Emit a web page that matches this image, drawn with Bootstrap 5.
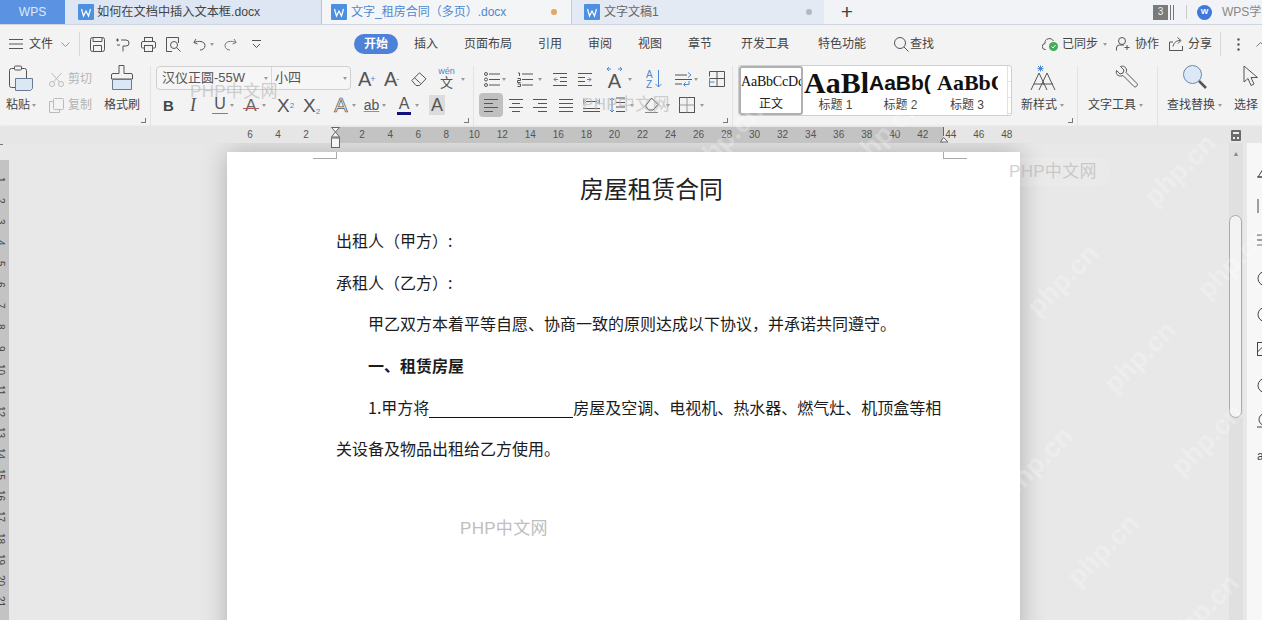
<!DOCTYPE html>
<html lang="zh-CN">
<head>
<meta charset="utf-8">
<title>WPS</title>
<link rel="stylesheet" href="https://cdn.jsdelivr.net/npm/bootstrap@5.3.0/dist/css/bootstrap.min.css">
<style>
html,body{height:100%;overflow:hidden;background:#e8e8e8}
body{font-family:"Liberation Sans","Noto Sans CJK SC",sans-serif;font-size:12px;color:#444;line-height:1.2}
.app{width:1262px;height:620px;overflow:hidden}
svg{flex:none;display:block}
.m1{margin-left:1px}.m2{margin-left:2px}.m3{margin-left:3px}.m4{margin-left:4px}.m5{margin-left:5px}.m6{margin-left:6px}.m7{margin-left:7px}.m8{margin-left:8px}.m9{margin-left:9px}.m10{margin-left:10px}.m11{margin-left:11px}.m12{margin-left:12px}.m13{margin-left:13px}.m14{margin-left:14px}.m15{margin-left:15px}.m16{margin-left:16px}.m26{margin-left:26px}.m28{margin-left:28px}.m29{margin-left:29px}.m93{margin-left:93px}.m108{margin-left:108px}
.rgap{margin-right:3px}
/* tab strip */
.tabstrip{height:25px;background:#f1f3f6;border-bottom:1px solid #cfd5de}
.tabstrip>*{flex:none}
.wps-tab{width:65px;height:24px;background:#5b93e2;color:#dfe9f8;justify-content:center}
.doc-tab{height:24px}
.dt1{width:257px;background:#dde6f2;border-right:1px solid #b9c3d0;padding-left:13px;color:#444;font-size:12.2px}
.dt2{width:249px;background:#f4f5f6;padding-left:9px;color:#4d88d2;font-size:12px}
.dt3{width:253px;background:#e4eaf3;border-left:1px solid #c4ccd8;padding-left:12px;color:#666;font-size:12px}
.dot{width:6px;height:6px;border-radius:50%;flex:none}
.dot-o{background:#e2a765;margin-left:45px}
.dot-g{background:#b5b8bd;margin-left:147px}
.plus{font-size:21px;font-weight:400;color:#444;margin-left:16px;line-height:24px;width:14px;text-align:center}
.cnt{width:15px;height:15px;background:#7a7a7a;color:#eee;font-size:10px;margin-left:299px;justify-content:center}
.cnt2{width:4px;height:15px;border-left:1px solid #777;border-right:1px solid #777;margin-left:2px}
.vsep{width:1px;height:14px;background:#ccc;margin-left:12px}
.wlogo{width:15px;height:15px;border-radius:50%;background:#3f78d8;color:#fff;font-size:8px;font-weight:700;justify-content:center;margin-left:10px}
.acad{margin-left:10px;color:#888;white-space:nowrap}
/* menu */
.menurow{height:38px;background:#f3f3f3}
.mdiv{width:1px;height:24px;background:#d8d8d8}
.pill{width:44px;height:20px;background:#4d82d8;color:#fff;border-radius:10px;font-weight:700;justify-content:center}
.crt{width:0;height:0;border-left:2.5px solid transparent;border-right:2.5px solid transparent;border-top:3px solid #999;flex:none}
/* ribbon */
.ribbon{height:64px;background:#f3f3f3;padding-top:3px}
.grp{height:60px;border-right:1px solid #e3e3e3;flex:none}
.launch{position:absolute;right:4px;bottom:3px;width:5px;height:5px;border-right:1px solid #777;border-bottom:1px solid #777}
.g-clip{width:151px}.g-font{width:323px}.g-para{width:259px}.g-sty{width:345px}.g-tool{width:80px}.g-find{width:104px;border-right:0}
.rw{height:26px;white-space:nowrap}
.big{height:52px}
.bigic{height:26px;margin-top:-1px}
.lbl{height:26px;line-height:26px;margin-top:1px}
.dim{color:#b3b3b3}
.fontbox{width:195px;height:24px;border:1px solid #cfcfcf;border-radius:4px;background:#f6f6f6;margin:-2px 0 0 5px;color:#555;font-size:13px}
.fbn{width:115px;padding-left:5px;height:22px;border-right:1px solid #d8d8d8;white-space:nowrap}
.fbs{width:78px;padding-left:3px}
.glyph{flex:none;text-align:center;color:#555;line-height:1}
.g-b{width:10px;font-weight:700;font-size:15px;color:#444}
.g-i{width:8px;font-family:"Liberation Serif",serif;font-style:italic;font-size:18px}
.g-u{width:16px;font-size:16px;border-bottom:1px solid #4d88d2;padding-bottom:1px}
.g-s{width:16px;font-size:17px;color:#666;position:relative}
.g-s::after{content:"";position:absolute;left:0;right:0;top:11px;height:1px;background:#b85555}
.g-x{width:18px;font-size:19px;white-space:nowrap;text-align:left;margin-right:-2px}
.g-x sup,.g-x sub{font-size:8px;color:#4d88d2}
.g-a{width:20px;font-size:20px;color:#f3f3f3;-webkit-text-stroke:.7px #555}
.g-ab{width:17px;font-size:14px;color:#555;text-decoration:underline;text-decoration-color:#a88}
.g-c{width:14px;font-size:16px;border-bottom:3px solid #12127a}
.g-h{width:16px;font-size:18px;background:#dcdcdc;height:20px;line-height:20px}
.g-ap{width:16px;font-size:20px;white-space:nowrap;text-align:left;margin-right:0}
.g-ap sup{font-size:9px;color:#4d88d2;margin-left:-1px}
.g-w{width:17px;font-size:13px;position:relative;padding-top:7px}
.g-w small{position:absolute;top:-2px;left:0;width:17px;font-size:9px;color:#4d88d2}
.g-sa{width:17px;font-size:20px;position:relative;padding-top:3px}
.g-sa svg{position:absolute;left:0;top:-2px}
.sortic{font-size:10px;fill:#4d88d2;font-family:"Liberation Sans",sans-serif}
.activ{width:24px;height:24px;background:#c0c0c0;border-radius:4px;justify-content:center}
/* styles gallery */
.gallery{width:274px;height:51px;margin:-1px 0 0 5px;border:1px solid #cfcfcf;border-radius:3px;background:#fff;overflow:hidden}
.sty{height:49px;overflow:hidden;flex:none;text-align:center}
.s0{width:64px;border:2px solid #b0b0b0;border-radius:3px}
.s1{width:65px}.s2{width:65px}.s3{width:62px;margin-left:3px}
.sp{height:32px;line-height:34px;white-space:nowrap;overflow:hidden;color:#111;text-align:left;padding-left:1px}
.sp0{font-family:"Liberation Serif",serif;font-size:14px;height:28px;line-height:28px;letter-spacing:-.2px;padding-left:0}
.sp1{font-family:"Liberation Serif",serif;font-weight:700;font-size:30px}
.sp2{font-weight:700;font-size:21px}
.sp3{font-family:"Liberation Serif",serif;font-weight:700;font-size:22px}
.sc{height:15px;line-height:15px;font-size:12px;color:#444}
.s0 .sc{height:17px;line-height:17px;color:#222}
.gscroll{width:11px;margin-left:9px;height:49px;border-left:1px solid #e2e2e2;flex:none}
.gscroll i{display:block;height:16px;border-bottom:1px solid #e2e2e2;text-align:center;font-style:normal;font-size:7px;line-height:16px;color:#888}
/* ruler */
.ruler{height:16px;background:linear-gradient(90deg,#e6e6e6 336px,#c3c3c3 336px,#c3c3c3 943px,#e6e6e6 943px);box-shadow:0 -1px 2px rgba(0,0,0,.08);position:relative}
.ticks{padding-left:236px}
.tk{width:28.04px;text-align:center;font-size:10px;color:#555;flex:none;line-height:16px}
.layout-ic{margin-left:auto;margin-right:21px}
.mk{position:absolute}
.mk-l{left:330px;top:127px}
.mk-r{left:940px;top:127px}
/* document area */
.work{height:477px;background:#e8e8e8}
.vrul{width:9px;height:477px;overflow:hidden;flex:none}
.vrul-top{height:16px}
.vrul-top i{display:block;width:3px;height:1px;background:#777;margin-top:1px}
.vrul-bar{height:461px;background:#c3c3c3;padding-top:9px}
.vn{height:21.1px;width:10px;writing-mode:vertical-rl;font-size:10px;line-height:10px;color:#444;text-align:center;margin-left:-5px;display:block}
.canvas{flex:1 1 auto;min-width:0;overflow:hidden;padding:9px 0 0 218px}
.pg{width:793px;height:520px;background:#fff;box-shadow:0 0 24px rgba(0,0,0,.25);padding:19px 79px 0 109px;position:relative;color:#1c1c1c;font-family:"Noto Sans CJK SC","Liberation Sans",sans-serif;font-size:16px}
.crop{position:absolute;width:24px;height:7px;top:0}
.crop-l{left:86px;border-right:1px solid #aaa;border-bottom:1px solid #aaa}
.crop-r{left:716px;border-left:1px solid #aaa;border-bottom:1px solid #aaa}
.ttl{font-size:23.8px;line-height:34px;text-align:center;margin:0 0 15px 26px;color:#222;font-weight:400}
.ln{height:41.7px;line-height:41.7px;margin:0;white-space:nowrap}
.ind{padding-left:32px}
.blank{display:inline-block;width:144px;height:19px;border-bottom:1px solid #111;vertical-align:-4px}
.track{width:14px;height:477px;background:#e0e0e0;flex:none;position:relative}
.track .up{height:20px;text-align:center;font-size:7px;line-height:22px;color:#888}
.thumb{height:203px;width:13px;margin:52px 0 0 0;background:#f3f3f3;border:1px solid #aaa;border-radius:7px}
.rp-gap{width:4px;flex:none}
.rpanel{width:15px;height:477px;background:#f7f7f7;flex:none;overflow:hidden;padding:0 0 0 10px}
.rpanel svg{margin-bottom:20.5px}
.rpanel .fst{margin-top:22px}
.rpanel .sk{margin-bottom:19px}
.rpanel .jmp{margin-bottom:23px}
/* watermarks */
.wm{position:absolute;color:#b4b4b4;opacity:.6;font-size:17px;letter-spacing:.3px;white-space:nowrap;font-family:"Liberation Sans","Noto Sans CJK SC",sans-serif}
.wm1{left:190px;top:82px}.wm2{left:1003px;top:158px;padding:4px 12px 4px 6px;background:rgba(255,255,255,.18);border-radius:6px;color:#b4b4b4}.wm3{left:460px;top:519px;opacity:.85}.wm4{left:582px;top:95px}
.wp{position:absolute;color:rgba(255,255,255,.26);font-size:27px;font-weight:700;transform:translate(-50%,-50%) rotate(-45deg);white-space:nowrap;font-family:"Liberation Sans",sans-serif}
.w1{left:1180px;top:170px}.w2{left:1063px;top:280px}.w3{left:1140px;top:357px}.w4{left:1207px;top:440px}.w5{left:1103px;top:550px}.w6{left:1037px;top:463px}.w7{left:1203px;top:610px}.w8{left:1233px;top:263px}.w9{left:885px;top:133px}.w10{left:727px;top:138px}
</style>
</head>
<body>
<div class="app position-relative">

<!-- tab strip -->
<div class="tabstrip d-flex align-items-start">
  <div class="wps-tab d-flex align-items-center">WPS</div>
  <div class="doc-tab dt1 d-flex align-items-center"><svg width="16" height="16" viewBox="0 0 16 16"><rect width="16" height="16" rx="1" fill="#4d90e0"/><path d="M3.5 5l2 7 2.5-5 2.500 5 2-7" fill="none" stroke="#fff" stroke-width="1.200"/></svg><span class="m3">如何在文档中插入文本框.docx</span></div>
  <div class="doc-tab dt2 d-flex align-items-center"><svg width="16" height="16" viewBox="0 0 16 16"><rect width="16" height="16" rx="1" fill="#4d90e0"/><path d="M3.5 5l2 7 2.5-5 2.500 5 2-7" fill="none" stroke="#fff" stroke-width="1.200"/></svg><span class="m4">文字_租房合同（多页）.docx</span><span class="dot dot-o"></span></div>
  <div class="doc-tab dt3 d-flex align-items-center"><svg width="16" height="16" viewBox="0 0 16 16"><rect width="16" height="16" rx="1" fill="#4d90e0"/><path d="M3.5 5l2 7 2.5-5 2.500 5 2-7" fill="none" stroke="#fff" stroke-width="1.200"/></svg><span class="m4">文字文稿1</span><span class="dot dot-g"></span></div>
  <span class="plus">+</span>
  <div class="d-flex align-items-center doc-tab">
    <span class="cnt d-flex align-items-center">3</span><span class="cnt2"></span><span class="vsep"></span>
    <span class="wlogo d-flex align-items-center">W</span><span class="acad">WPS学</span>
  </div>
</div>

<!-- menu row -->
<div class="menurow d-flex align-items-center">
  <svg class="m9" width="14" height="10" viewBox="0 0 14 10"><path d="M0 .5h14M0 5h14M0 9.500h14" stroke="#555"/></svg>
  <span class="m6">文件</span>
  <svg class="m8" width="9" height="5" viewBox="0 0 9 5"><path d="M.5.5l4 4 4-4" fill="none" stroke="#999"/></svg>
  <span class="mdiv m9"></span>
  <svg class="m10" width="15" height="15" viewBox="0 0 15 15" fill="none" stroke="#555"><rect x=".5" y=".5" width="14" height="14" rx="2"/><path d="M3 .5v4h9v-4M3.500 14.500v-6h8v6"/></svg>
  <svg class="m11" width="15" height="15" viewBox="0 0 15 15" fill="none" stroke="#555"><path d="M5 3h5a3 3 0 0 1 0 6H7v5.500M0 3h3M1.500 1.500v3M1 8h3"/></svg>
  <svg class="m10" width="15" height="15" viewBox="0 0 15 15" fill="none" stroke="#555"><rect x="3.500" y=".5" width="8" height="4"/><path d="M3 11H1.500a1 1 0 0 1-1-1V6a1.500 1.500 0 0 1 1.500-1.500h11A1.500 1.500 0 0 1 14.500 6v4a1 1 0 0 1-1 1H12"/><rect x="3.500" y="8.500" width="8" height="6"/></svg>
  <svg class="m10" width="15" height="15" viewBox="0 0 15 15" fill="none" stroke="#555"><path d="M12.500 6V.5H.5v14H6"/><circle cx="8" cy="8" r="3.500"/><path d="M10.500 10.500l4 4"/></svg>
  <svg class="m12" width="13" height="13" viewBox="0 0 13 13" fill="none" stroke="#555"><path d="M3 1L.8 4.500 4.500 6M1 4.500C5 2.500 12 3 12 7.500c0 3-2.500 4.500-5 4.500"/></svg>
  <span class="crt m4"></span>
  <svg class="m10" width="13" height="13" viewBox="0 0 13 13" fill="none" stroke="#777"><path d="M10 1l2.200 3.500L8.500 6M12 4.500C8 2.500 1 3 1 7.500c0 3 2.500 4.500 5 4.500"/></svg>
  <svg class="m15" width="9" height="9" viewBox="0 0 9 9" fill="none" stroke="#555"><path d="M0 .5h9M1 4l3.500 3.500L8 4"/></svg>
  <span class="pill d-flex align-items-center m93">开始</span>
  <span class="m16">插入</span><span class="m26">页面布局</span><span class="m26">引用</span><span class="m26">审阅</span><span class="m26">视图</span><span class="m26">章节</span><span class="m29">开发工具</span><span class="m29">特色功能</span>
  <svg class="m28" width="15" height="15" viewBox="0 0 15 15" fill="none" stroke="#555"><circle cx="6" cy="6" r="5.500"/><path d="M10 10l4.500 4.500"/></svg>
  <span class="m1">查找</span>
  <svg class="m108" width="17" height="15" viewBox="0 0 17 15"><path d="M4 12.500H3.500a3 3 0 0 1-.5-6A4.500 4.500 0 0 1 11.500 4" fill="none" stroke="#555"/><circle cx="11.500" cy="9.500" r="4.500" fill="#3eae5a"/><path d="M9.500 9.500l1.500 1.500 2.500-3" fill="none" stroke="#fff"/></svg>
  <span class="m3">已同步</span><span class="crt m5"></span>
  <svg class="m9" width="15" height="14" viewBox="0 0 15 14" fill="none" stroke="#555"><circle cx="6" cy="4" r="3.500"/><path d="M.5 13.500V11a3 3 0 0 1 3-3H8M11 8v5M8.500 10.500h5"/></svg>
  <span class="m4">协作</span>
  <svg class="m10" width="15" height="14" viewBox="0 0 15 14" fill="none" stroke="#555"><path d="M4 5H.5v8.500h13V9M4 9.500C5 5 8 3.500 11 3.500M8.500.5l3.500 3-3 3"/></svg>
  <span class="m4">分享</span>
  <span class="mdiv m8"></span>
  <svg class="m16" width="3" height="13" viewBox="0 0 3 13" fill="#555"><circle cx="1.500" cy="1.500" r="1.200"/><circle cx="1.500" cy="6.500" r="1.200"/><circle cx="1.500" cy="11.500" r="1.200"/></svg>
  <svg class="m16" width="6" height="5" viewBox="0 0 6 5"><path d="M.5 4.500l4-4 2 2" fill="none" stroke="#777"/></svg>
</div>

<!-- ribbon -->
<div class="ribbon d-flex">
  <div class="grp g-clip d-flex position-relative">
    <div class="big m6">
      <div class="bigic d-flex"><svg class="m3" width="25" height="26" viewBox="0 0 25 26" fill="none" stroke="#555"><rect x=".5" y="3.500" width="17" height="19" rx="2"/><rect x="5.500" y="1" width="7" height="4" rx="1" fill="#f3f3f3"/><path d="M6.500 13.500h17v10l-2 2h-15z" fill="#dce7f5" stroke="#6a7a90"/></svg></div>
      <div class="lbl d-flex align-items-center">粘贴<span class="crt m2"></span></div>
    </div>
    <div class="d-flex flex-column">
      <div class="rw d-flex align-items-center m13"><svg width="15" height="15" viewBox="0 0 15 15" fill="none" stroke="#bbb"><circle cx="3" cy="12" r="2.500"/><circle cx="12" cy="12" r="2.500"/><path d="M4.500 10L12.500 1M10.500 10L2.500 1"/></svg><span class="m4 dim">剪切</span></div>
      <div class="rw d-flex align-items-center m13"><svg width="15" height="15" viewBox="0 0 15 15" fill="none" stroke="#bbb"><rect x="4.500" y=".5" width="10" height="11" rx="1"/><path d="M4 3.500H.5v11h10V12"/></svg><span class="m4 dim">复制</span></div>
    </div>
    <div class="big m10">
      <div class="bigic d-flex justify-content-center"><svg class="m2" width="22" height="26" viewBox="0 0 22 26" fill="none" stroke="#555"><path d="M8 .5h5v8h7a1.500 1.500 0 0 1 1.500 1.500v4H.5v-4A1.500 1.500 0 0 1 2 8.500h6z"/><path d="M1.500 14.500h19v10h-19z" fill="#dce7f5" stroke="#6a7a90"/></svg></div>
      <div class="lbl m2">格式刷</div>
    </div>
    <span class="launch"></span>
  </div>

  <div class="grp g-font position-relative">
    <div class="rw d-flex align-items-center">
      <div class="fontbox d-flex align-items-center">
        <div class="fbn d-flex align-items-center">汉仪正圆-55W<span class="crt ms-auto rgap"></span></div>
        <div class="fbs d-flex align-items-center">小四<span class="crt ms-auto rgap"></span></div>
      </div>
      <span class="glyph g-ap m7">A<sup>+</sup></span>
      <span class="glyph g-ap m10">A<sup>-</sup></span>
      <svg class="m11" width="16" height="14" viewBox="0 0 16 14" fill="none" stroke="#555"><path d="M5 13.500L.8 8.500 8.500.8l6.500 6-6.500 6.700zM3.500 5.800l6 5.500"/></svg>
      <span class="glyph g-w m11"><small>wén</small>文</span><span class="crt m6"></span>
    </div>
    <div class="rw d-flex align-items-center">
      <span class="glyph g-b m12">B</span><span class="glyph g-i m16">I</span><span class="glyph g-u m15">U</span><span class="crt m2"></span>
      <span class="glyph g-s m9">A</span><span class="crt m3"></span>
      <span class="glyph g-x m11">X<sup>2</sup></span><span class="glyph g-x m10">X<sub>2</sub></span>
      <span class="glyph g-a m12">A</span><span class="crt m1"></span>
      <span class="glyph g-ab m7">ab</span><span class="crt m2"></span>
      <span class="glyph g-c m11">A</span><span class="crt m4"></span>
      <span class="glyph g-h m10">A</span>
    </div>
    <span class="launch"></span>
  </div>

  <div class="grp g-para position-relative">
    <div class="rw d-flex align-items-center">
      <svg class="m10" width="16" height="15" viewBox="0 0 16 15" fill="none" stroke="#555"><path d="M5 2h11M5 7.500h11M5 13h11"/><circle cx="2" cy="2" r="1.500"/><circle cx="2" cy="7.500" r="1.500"/><circle cx="2" cy="13" r="1.500"/></svg><span class="crt m2"></span>
      <svg class="m11" width="16" height="15" viewBox="0 0 16 15" fill="none" stroke="#555"><path d="M5 2h11M5 7.500h11M5 13h11M1 1h1.500v3M.5 6.500h3v2h-3v2h3M.5 12h3v2.500h-3"/></svg><span class="crt m5"></span>
      <svg class="m11" width="14" height="13" viewBox="0 0 14 13" fill="none" stroke="#555"><path d="M0 .5h14M7 4.500h7M7 8.500h7M0 12.500h14"/><path d="M5 6.500H1M3 4.500l-2 2 2 2" stroke="#4d88d2"/></svg>
      <svg class="m11" width="14" height="13" viewBox="0 0 14 13" fill="none" stroke="#555"><path d="M0 .5h14M0 4.500h7M0 8.500h7M0 12.500h14"/><path d="M9 6.500h4M11 4.500l2 2-2 2" stroke="#4d88d2"/></svg>
      <span class="glyph g-sa m14">A<svg width="17" height="6" viewBox="0 0 17 6" fill="none" stroke="#4d88d2"><path d="M1 3h4M3 1L1 3l2 2M16 3h-4M14 1l2 2-2 2"/></svg></span><span class="crt m5"></span>
      <svg class="m14" width="16" height="20" viewBox="0 0 16 20" fill="none" stroke="#4d88d2"><path d="M12.500 1v17M9.500 15l3 3 3-3"/><text class="sortic" x="0" y="9" stroke="none">A</text><text class="sortic" x="0" y="19" stroke="none">Z</text></svg>
      <svg class="m13" width="17" height="15" viewBox="0 0 17 15" fill="none" stroke="#555"><path d="M0 3h12M0 7.500h17M0 12h7"/><path d="M13 .5l3 2.500-3 2.500M14 9v3.500h-5M10.500 10.500L8.500 12.500l2 2" stroke="#4d88d2"/></svg><span class="crt m2"></span>
      <svg class="m11" width="16" height="16" viewBox="0 0 16 16" fill="none" stroke="#555"><path d="M.5 5.500v-5h15v15H.5v-5M.5 7.500h15M8 .5v15"/><path d="M.5 7.500v8M.5 11h5" stroke="#4d88d2"/></svg>
    </div>
    <div class="rw d-flex align-items-center">
      <span class="activ d-flex align-items-center m5"><svg width="14" height="13" viewBox="0 0 14 13" stroke="#555"><path d="M0 .5h14M0 4.500h9M0 8.500h14M0 12.500h9"/></svg></span>
      <svg class="m6" width="14" height="13" viewBox="0 0 14 13" stroke="#555"><path d="M0 .5h14M3 4.500h8M0 8.500h14M3 12.500h8"/></svg>
      <svg class="m10" width="14" height="13" viewBox="0 0 14 13" stroke="#555"><path d="M0 .5h14M5 4.500h9M0 8.500h14M5 12.500h9"/></svg>
      <svg class="m12" width="14" height="13" viewBox="0 0 14 13" stroke="#555"><path d="M0 .5h14M0 4.500h14M0 8.500h14M0 12.500h14"/></svg>
      <svg class="m10" width="17" height="14" viewBox="0 0 17 14" fill="none" stroke="#555"><path d="M0 .5v6M17 .5v6M0 10.500h17M0 13.500h17M3 3.500h11"/><path d="M3 1.500l-2 2 2 2M14 1.500l2 2-2 2" stroke="#4d88d2"/></svg>
      <svg class="m9" width="16" height="16" viewBox="0 0 16 16" fill="none" stroke="#555"><path d="M7 1h9M7 5.500h9M7 10h9M7 14.500h9"/><path d="M3 1v14M1 3l2-2 2 2M1 13l2 2 2-2" stroke="#4d88d2"/></svg><span class="crt m5"></span>
      <svg class="m10" width="17" height="16" viewBox="0 0 17 16" fill="none" stroke="#555"><path d="M7.500 1l6.500 6.500-5 5.500H5L1.500 9z"/><path d="M1 15.500h13" stroke="#888"/></svg><span class="crt m5"></span>
      <svg class="m9" width="16" height="16" viewBox="0 0 16 16" fill="none" stroke="#555"><rect x=".5" y=".5" width="15" height="15"/><path d="M8 .5v15M.5 8h15" stroke="#999"/></svg><span class="crt m5"></span>
    </div>
    <span class="launch"></span>
  </div>

  <div class="grp g-sty d-flex position-relative">
    <div class="gallery d-flex">
      <div class="sty s0"><div class="sp sp0">AaBbCcDc</div><div class="sc">正文</div></div>
      <div class="sty s1"><div class="sp sp1">AaBl</div><div class="sc">标题 1</div></div>
      <div class="sty s2"><div class="sp sp2">AaBb(</div><div class="sc">标题 2</div></div>
      <div class="sty s3"><div class="sp sp3">AaBbC</div><div class="sc">标题 3</div></div>
      <div class="gscroll"><i>▲</i><i>▼</i><i>▼</i></div>
    </div>
    <div class="big m9">
      <div class="bigic d-flex justify-content-center"><svg width="26" height="26" viewBox="0 0 26 26" fill="none" stroke="#555"><path d="M1 25L9 8l8 17M4 19h10M9 25L17 8l8 17M13 19h10"/><path d="M8 1l5 5M13 1L8 6M10.500 .5v6M7.500 3.500h6" stroke="#4d88d2"/></svg></div>
      <div class="lbl d-flex align-items-center">新样式<span class="crt m3"></span></div>
    </div>
    <span class="launch"></span>
  </div>

  <div class="grp g-tool">
    <div class="big m10">
      <div class="bigic d-flex justify-content-center"><svg class="m9" width="24" height="24" viewBox="0 0 24 24" fill="none" stroke="#555"><path d="M1.500 5.500L5 9l3-1 1-3L5.500 1.500C8 .5 11 1.500 11.500 5c0 1 0 1.500-.5 2.500l11 11c1.500 1.500-1.500 4.500-3 3l-11-11c-3 1.500-8 0-6.500-5z"/></svg></div>
      <div class="lbl d-flex align-items-center">文字工具<span class="crt m3"></span></div>
    </div>
  </div>

  <div class="grp g-find d-flex">
    <div class="big m9">
      <div class="bigic d-flex justify-content-center"><svg width="24" height="24" viewBox="0 0 24 24" fill="none" stroke="#555"><circle cx="9.500" cy="9.500" r="9" fill="#dde8f6" stroke="#6d86a8"/><path d="M16 16l7 7" stroke-width="2.500"/></svg></div>
      <div class="lbl d-flex align-items-center">查找替换<span class="crt m3"></span></div>
    </div>
    <div class="big m12 text-nowrap">
      <div class="bigic d-flex"><svg class="m9" width="16" height="22" viewBox="0 0 16 22" fill="none" stroke="#555"><path d="M1 1v16l4-3.500 3 7 3-1.500-3-6.500h6.500z"/></svg></div>
      <div class="lbl">选择</div>
    </div>
  </div>
</div>

<!-- horizontal ruler -->
<div class="ruler d-flex align-items-center ticks">
  <span class="tk">6</span><span class="tk">4</span><span class="tk">2</span><span class="tk"></span><span class="tk">2</span><span class="tk">4</span><span class="tk">6</span><span class="tk">8</span><span class="tk">10</span><span class="tk">12</span><span class="tk">14</span><span class="tk">16</span><span class="tk">18</span><span class="tk">20</span><span class="tk">22</span><span class="tk">24</span><span class="tk">26</span><span class="tk">28</span><span class="tk">30</span><span class="tk">32</span><span class="tk">34</span><span class="tk">36</span><span class="tk">38</span><span class="tk">40</span><span class="tk">42</span><span class="tk">44</span><span class="tk">46</span><span class="tk">48</span>
  <svg class="layout-ic" width="10" height="11" viewBox="0 0 10 11"><rect width="10" height="11" rx="1" fill="#6b6b6b"/><path d="M2 2h6v2H2zM2 7h2v2H2zM6 7h2v2H6z" fill="#eee"/></svg>
</div>

<!-- document area -->
<div class="work d-flex">
  <div class="vrul">
    <div class="vrul-top"><i></i></div>
    <div class="vrul-bar">
      <span class="vn">1</span><span class="vn">2</span><span class="vn">3</span><span class="vn">4</span><span class="vn">5</span><span class="vn">6</span><span class="vn">7</span><span class="vn">8</span><span class="vn">9</span><span class="vn">10</span><span class="vn">11</span><span class="vn">12</span><span class="vn">13</span><span class="vn">14</span><span class="vn">15</span><span class="vn">16</span><span class="vn">17</span><span class="vn">18</span><span class="vn">19</span><span class="vn">20</span><span class="vn">21</span>
    </div>
  </div>
  <div class="canvas">
    <div class="pg">
      <span class="crop crop-l"></span><span class="crop crop-r"></span>
      <h1 class="ttl">房屋租赁合同</h1>
      <p class="ln">出租人（甲方）:</p>
      <p class="ln">承租人（乙方）:</p>
      <p class="ln ind">甲乙双方本着平等自愿、协商一致的原则达成以下协议，并承诺共同遵守。</p>
      <p class="ln ind fw-bold">一、租赁房屋</p>
      <p class="ln ind">1.甲方将<span class="blank"></span>房屋及空调、电视机、热水器、燃气灶、机顶盒等相</p>
      <p class="ln">关设备及物品出租给乙方使用。</p>
    </div>
  </div>
  <div class="track"><div class="up">▲</div><div class="thumb"></div></div>
  <div class="rp-gap"></div>
  <div class="rpanel">
    <svg class="fst sk" width="14" height="15" viewBox="0 0 14 15" fill="none" stroke="#444"><path d="M1 12L8 1v11zM0 12h12"/></svg>
    <svg class="sk" width="14" height="15" viewBox="0 0 14 15" fill="none" stroke="#444"><path d="M1 0v14"/></svg>
    <svg class="jmp" width="14" height="15" viewBox="0 0 14 15" fill="none" stroke="#444"><path d="M0 2h14M0 7h14M0 12h14"/></svg>
    <svg width="14" height="15" viewBox="0 0 14 15" fill="none" stroke="#444"><circle cx="8" cy="7.500" r="7"/></svg>
    <svg width="14" height="15" viewBox="0 0 14 15" fill="none" stroke="#444"><circle cx="8" cy="7.500" r="7"/></svg>
    <svg width="14" height="15" viewBox="0 0 14 15" fill="none" stroke="#444"><rect x=".5" y=".5" width="13" height="13"/><path d="M.5 10l5-5"/></svg>
    <svg width="14" height="15" viewBox="0 0 14 15" fill="none" stroke="#444"><circle cx="8" cy="7.500" r="7"/></svg>
    <svg width="14" height="15" viewBox="0 0 14 15" fill="none" stroke="#444"><circle cx="8" cy="6.500" r="6"/><path d="M0 14h12"/></svg>
    <span class="d-block">a</span>
  </div>
</div>

<!-- ruler markers and watermarks lie over everything -->
<svg class="mk mk-l" width="11" height="22" viewBox="0 0 11 22" fill="#f4f4f4" stroke="#666"><path d="M1.500 .5h8L5.500 5zM5.500 5l4 5h-8z"/><rect x="1.500" y="11" width="8" height="9.500"/></svg>
<svg class="mk mk-r" width="9" height="16" viewBox="0 0 9 16" fill="#f4f4f4" stroke="#666"><path d="M3.500 0v9M.5 15L3.500 10.500 8 15z"/></svg>
<span class="wm wm1">PHP中文网</span>
<span class="wm wm2">PHP中文网</span>
<span class="wm wm3">PHP中文网</span>
<span class="wm wm4">PHP中文网</span>
<span class="wp w1">php.cn</span><span class="wp w2">php.cn</span><span class="wp w3">php.cn</span><span class="wp w4">php.cn</span><span class="wp w5">php.cn</span><span class="wp w6">php.cn</span><span class="wp w7">php.cn</span><span class="wp w8">php.cn</span><span class="wp w9">php.cn</span><span class="wp w10">php.cn</span>
</div>
<script src="https://cdn.jsdelivr.net/npm/bootstrap@5.3.0/dist/js/bootstrap.bundle.min.js"></script>
</body>
</html>
